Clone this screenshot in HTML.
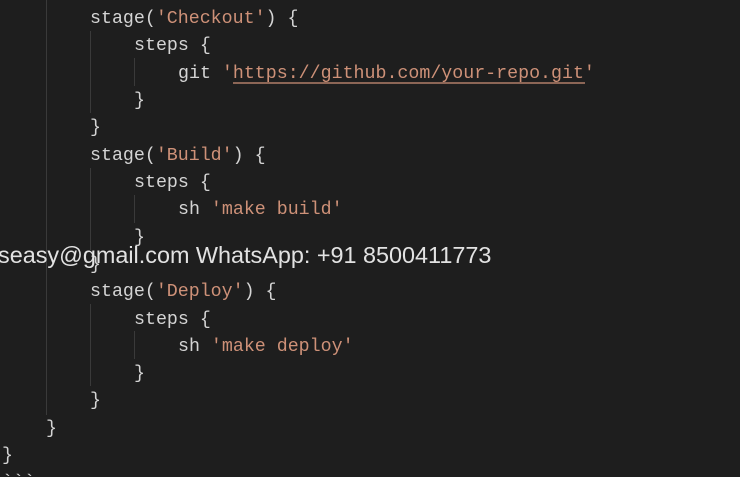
<!DOCTYPE html>
<html><head><meta charset="utf-8"><style>
html,body{margin:0;padding:0;background:#1e1e1e;width:740px;height:477px;overflow:hidden}
</style></head><body>
<svg width="740" height="477" style="display:block" xmlns="http://www.w3.org/2000/svg">
<rect width="740" height="477" fill="#1e1e1e"/>
<g stroke="#3a3a3a" stroke-width="1">
<line x1="46.5" y1="0" x2="46.5" y2="415"/>
<line x1="90.5" y1="31" x2="90.5" y2="113"/>
<line x1="90.5" y1="168" x2="90.5" y2="250"/>
<line x1="90.5" y1="304" x2="90.5" y2="386"/>
<line x1="134.5" y1="58" x2="134.5" y2="86"/>
<line x1="134.5" y1="195" x2="134.5" y2="223"/>
<line x1="134.5" y1="331" x2="134.5" y2="359"/>
</g>
<g font-family="Liberation Mono, monospace" font-size="18.3" fill="#d4d4d4" xml:space="preserve">
<text x="90" y="23">stage(<tspan fill="#ce9178">'Checkout'</tspan>) {</text>
<text x="134" y="50">steps {</text>
<text x="178" y="78">git <tspan fill="#ce9178">'https://github.com/your-repo.git'</tspan></text>
<text x="134" y="105">}</text>
<text x="90" y="132">}</text>
<text x="90" y="160">stage(<tspan fill="#ce9178">'Build'</tspan>) {</text>
<text x="134" y="187">steps {</text>
<text x="178" y="214">sh <tspan fill="#ce9178">'make build'</tspan></text>
<text x="134" y="242">}</text>
<text x="90" y="269">}</text>
<text x="90" y="296">stage(<tspan fill="#ce9178">'Deploy'</tspan>) {</text>
<text x="134" y="324">steps {</text>
<text x="178" y="351">sh <tspan fill="#ce9178">'make deploy'</tspan></text>
<text x="134" y="378">}</text>
<text x="90" y="405">}</text>
<text x="46" y="433">}</text>
<text x="2" y="460">}</text>
<text x="2" y="487">&#96;&#96;&#96;</text>
</g>
<line x1="233" y1="83" x2="585" y2="83" stroke="#ce9178" stroke-width="1.3"/>
<text x="-2" y="263" font-family="Liberation Sans, sans-serif" font-size="23.4" fill="#e2e2e2">seasy@gmail.com WhatsApp: +91 8500411773</text>
</svg>
</body></html>
